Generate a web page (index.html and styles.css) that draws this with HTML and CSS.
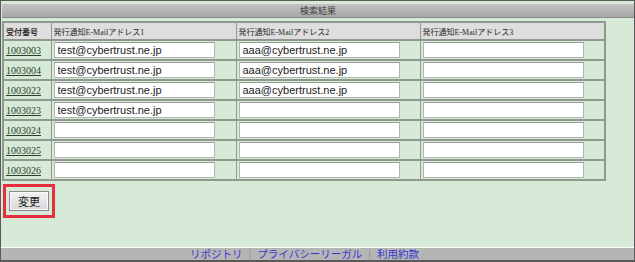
FILE: index.html
```html
<!DOCTYPE html>
<html lang="ja">
<head>
    <meta charset="UTF-8">
    <title>検索結果</title>
    <link rel="stylesheet" href="styles.css">
</head>
<body>
    <div class="frame">
        <div class="title-bar">検索結果</div>

        <form class="result-form">
            <table class="result-table">
                <colgroup>
                    <col class="col-no">
                    <col class="col-mail1">
                    <col class="col-mail2">
                    <col class="col-mail3">
                </colgroup>
                <tr>
                    <th class="head-no">受付番号</th>
                    <th>発行通知E-Mailアドレス1</th>
                    <th>発行通知E-Mailアドレス2</th>
                    <th>発行通知E-Mailアドレス3</th>
                </tr>
                <tr>
                    <td class="no"><a href="#">1003003</a></td>
                    <td><input type="text" value="test@cybertrust.ne.jp"></td>
                    <td><input type="text" value="aaa@cybertrust.ne.jp"></td>
                    <td><input type="text" value=""></td>
                </tr>
                <tr>
                    <td class="no"><a href="#">1003004</a></td>
                    <td><input type="text" value="test@cybertrust.ne.jp"></td>
                    <td><input type="text" value="aaa@cybertrust.ne.jp"></td>
                    <td><input type="text" value=""></td>
                </tr>
                <tr>
                    <td class="no"><a href="#">1003022</a></td>
                    <td><input type="text" value="test@cybertrust.ne.jp"></td>
                    <td><input type="text" value="aaa@cybertrust.ne.jp"></td>
                    <td><input type="text" value=""></td>
                </tr>
                <tr>
                    <td class="no"><a href="#">1003023</a></td>
                    <td><input type="text" value="test@cybertrust.ne.jp"></td>
                    <td><input type="text" value=""></td>
                    <td><input type="text" value=""></td>
                </tr>
                <tr>
                    <td class="no"><a href="#">1003024</a></td>
                    <td><input type="text" value=""></td>
                    <td><input type="text" value=""></td>
                    <td><input type="text" value=""></td>
                </tr>
                <tr>
                    <td class="no"><a href="#">1003025</a></td>
                    <td><input type="text" value=""></td>
                    <td><input type="text" value=""></td>
                    <td><input type="text" value=""></td>
                </tr>
                <tr>
                    <td class="no"><a href="#">1003026</a></td>
                    <td><input type="text" value=""></td>
                    <td><input type="text" value=""></td>
                    <td><input type="text" value=""></td>
                </tr>
            </table>

            <div class="actions">
                <button type="submit" class="button">変更</button>
            </div>
        </form>

        <div class="footer">
            <a href="#">リポジトリ</a><span class="sep">|</span><a href="#">プライバシーリーガル</a><span class="sep">|</span><a href="#">利用約款</a>
        </div>
    </div>
</body>
</html>
```

FILE: styles.css
```css
body {
    margin: 0;
    padding: 0;
    background-color: #d7ead7;
    font-family: "Liberation Serif", "Noto Sans CJK JP", serif;
}
.frame {
    box-sizing: border-box;
    height: 262px;
    border: 1px solid #5a5a5a;
    border-bottom-width: 2px;
    display: flex;
    flex-direction: column;
    background-color: #d7ead7;
}
.title-bar {
    margin: 3px 0 0 1px;
    height: 13px;
    line-height: 13px;
    background: linear-gradient(#c2c2c2, #a9a9a9);
    border-bottom: 1px solid #8a8a8a;
    text-align: center;
    font-family: "Noto Sans CJK JP", sans-serif;
    font-size: 9px;
    color: #3c3c3c;
}
.result-form {
    flex: 1;
    margin: 3px 0 0 1px;
}
.result-table {
    table-layout: fixed;
    width: 602px;
    border-collapse: collapse;
    border: 2px solid #8e9a8e;
}
.col-no {
    width: 48px;
}
.col-mail1 {
    width: 185px;
}
.col-mail2 {
    width: 184px;
}
.col-mail3 {
    width: 185px;
}
.result-table th {
    box-sizing: border-box;
    height: 18px;
    padding: 0 0 0 2px;
    background-color: #dedede;
    border: 1px solid #8e9a8e;
    text-align: left;
    font-family: "Liberation Serif", "Noto Sans CJK JP", serif;
    font-size: 8px;
    font-weight: normal;
    color: #2a2a2a;
    white-space: nowrap;
    overflow: hidden;
}
.result-table th.head-no {
    font-weight: bold;
    color: #333;
}
.result-table td {
    box-sizing: border-box;
    padding: 1px 0 1px 2px;
    border: 2px solid #8e9a8e;
    border-left-width: 1px;
    border-right-width: 1px;
}
.result-table td.no {
    padding: 0 0 0 2px;
    font-size: 10px;
}
.no a {
    color: #2b3f2b;
    text-decoration: underline;
}
.result-table input {
    box-sizing: border-box;
    display: block;
    width: 161px;
    height: 16px;
    margin: 0;
    padding: 0 3px;
    border: 1px solid #b4b4b4;
    border-top-color: #9a9a9a;
    background-color: #fff;
    font-family: "Liberation Sans", sans-serif;
    font-size: 11px;
    color: #222;
}
.actions {
    display: inline-block;
    margin: 3px 0 0 1px;
    padding: 4px 3px 4px 3px;
    border: 3px solid #e52f3f;
}
.button {
    display: block;
    width: 40px;
    height: 20px;
    padding: 0;
    background: linear-gradient(#f2f2f2, #d8d8d8);
    border: 1px solid #8a8a8a;
    box-shadow: inset 0 0 0 1px #fafafa;
    font-family: "Noto Sans CJK JP", sans-serif;
    font-size: 11px;
    color: #222;
}
.footer {
    border-top: 1px solid #ffffff;
    height: 12px;
    padding-right: 26px;
    line-height: 12px;
    background-color: #b5b5b5;
    text-align: center;
    font-family: "Noto Sans CJK JP", sans-serif;
    font-size: 10.5px;
}
.footer a {
    color: #3838d0;
    text-decoration: none;
}
.sep {
    color: #8a8a8a;
    margin: 0 6px;
}
```
